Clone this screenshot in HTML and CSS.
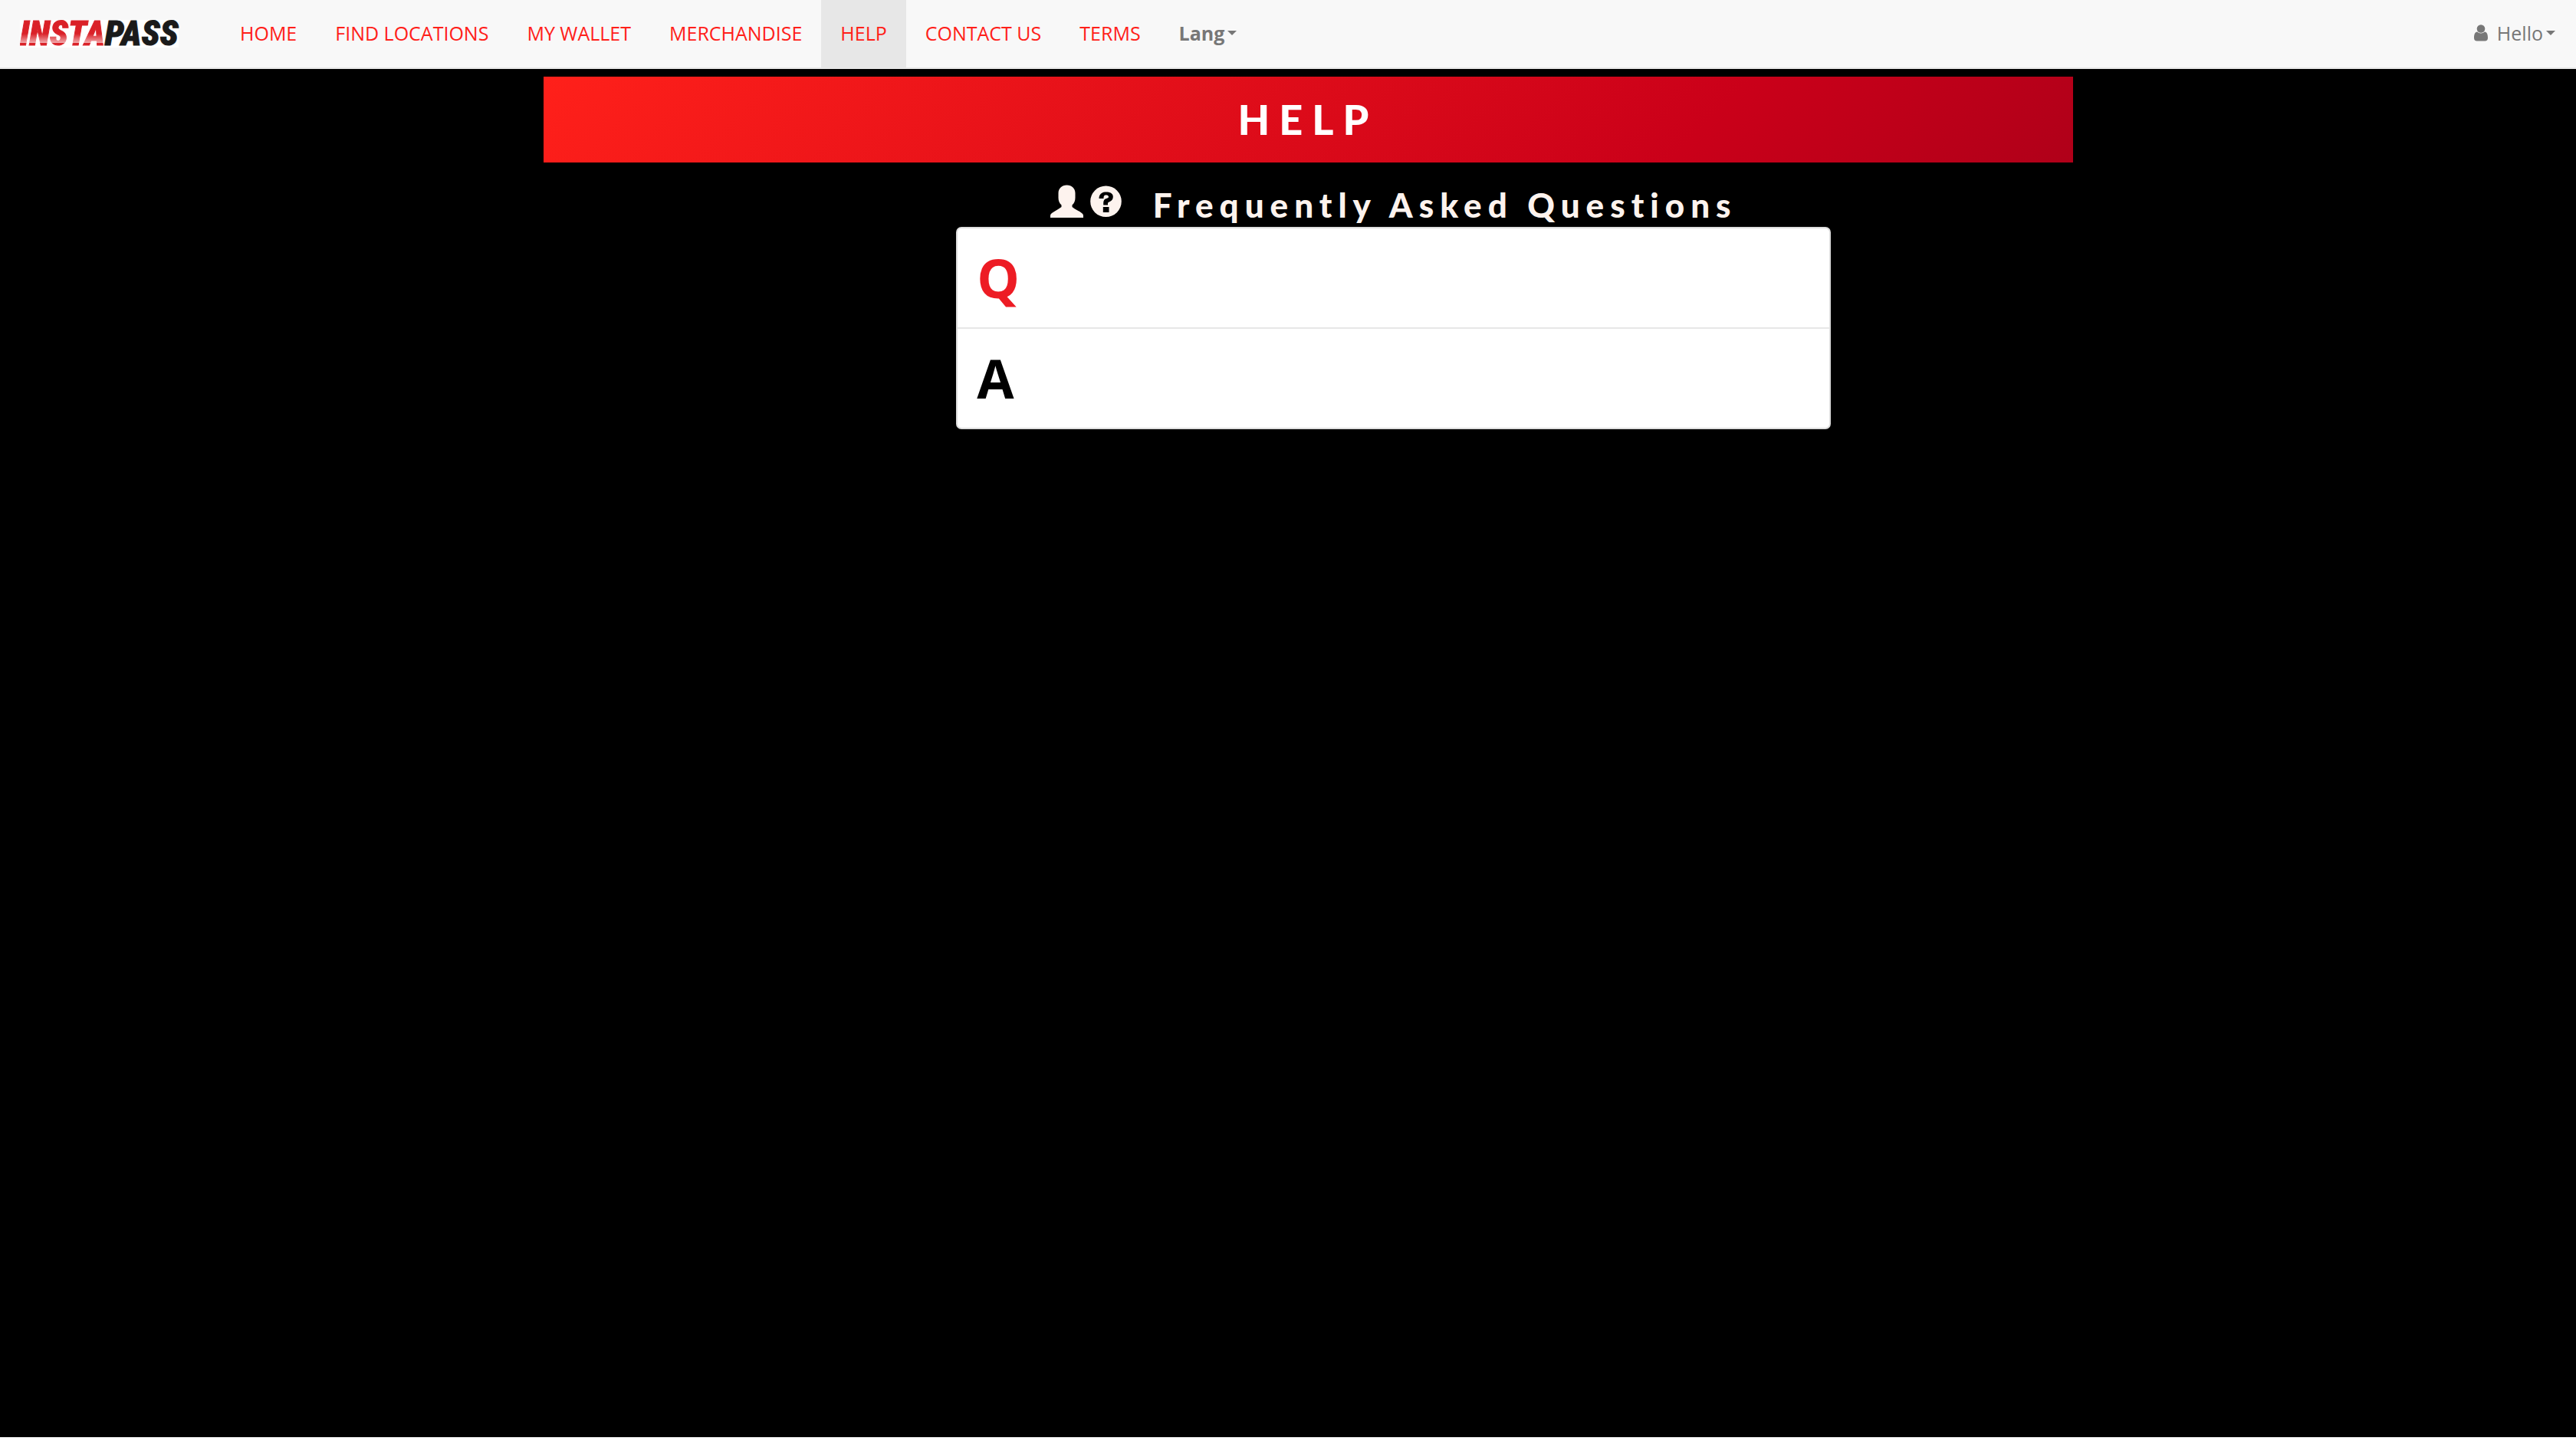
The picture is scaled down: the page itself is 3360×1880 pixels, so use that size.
FILE: index.html
```html
<!DOCTYPE html>
<html lang="en">
<head>
<meta charset="utf-8">
<title>Instapass - Help</title>
<link rel="stylesheet" href="styles.css">
</head>
<body>
<div class="page">
<header class="navbar">
  <a class="brand" href="#" aria-label="Instapass"><span class="logo"><span class="brand-insta">INSTA</span><span class="brand-pass">PASS</span></span></a>
  <nav class="nav">
    <a class="nav-link" href="#">HOME</a>
    <a class="nav-link" href="#">FIND LOCATIONS</a>
    <a class="nav-link" href="#">MY WALLET</a>
    <a class="nav-link" href="#">MERCHANDISE</a>
    <a class="nav-link active" href="#">HELP</a>
    <a class="nav-link" href="#">CONTACT US</a>
    <a class="nav-link" href="#">TERMS</a>
    <button class="nav-link toggle lang" type="button">Lang<span class="caret"></span></button>
  </nav>
  <button class="nav-link toggle user" type="button">
    <svg class="user-icon" viewBox="0 0 18 22" aria-hidden="true"><circle cx="9" cy="5.500" r="5.300"/><path d="M4.200 9.600C1 10 0 13.500 0 17.500C0 20 1.400 21.600 3.800 21.600H14.200C16.600 21.600 18 20 18 17.500C18 13.500 17 10 13.800 9.600C11.500 12.200 6.500 12.200 4.200 9.600Z"/></svg>
    Hello<span class="caret"></span>
  </button>
</header>
<main class="container">
  <h1 class="banner">HELP</h1>
  <section class="faq">
    <h2 class="faq-title">
      <svg class="faq-icon" viewBox="0 0 43 43" aria-hidden="true"><path d="M21.500 0.500C28 0.500 32.500 5 32.500 11V17C32.500 21 31 24.500 28.500 26.500V29C32 32 38 34.500 41 37Q43 38.500 43 40V43H0V40Q0 38.500 2 37C6 34 11 32 14.500 29V26.500C12 24.500 10.500 21 10.500 17V11C10.500 5 15 0.500 21.500 0.500Z"/></svg>
      <svg class="faq-icon" viewBox="0 0 43 43" aria-hidden="true"><path fill-rule="evenodd" d="M21.500 1.500A20.300 20.300 0 1 0 21.500 42.100A20.300 20.300 0 1 0 21.500 1.500ZM12.500 18H18.500C18.500 14.500 19.500 13.500 21.700 13.500C24 13.500 25 14.500 25 15.800C25 16.600 24.500 17.400 23 17.700C19.500 18.400 18.200 20.500 18.200 24V26.500H24V24.500C24 23.300 24.800 22.800 26.200 22.300C29.600 21 30.800 18.600 30.800 15.500C30.800 11.500 27 9.500 21.700 9.500C16 9.500 12.500 12.500 12.500 18ZM17.800 29V36H25.500V29Z"/></svg>
      <span class="faq-text">Frequently Asked Questions</span>
    </h2>
    <ul class="list">
      <li class="item question">Q</li>
      <li class="item answer">A</li>
    </ul>
  </section>
</main>
</div>
</body>
</html>
```
FILE: styles.css
```css
* { box-sizing: border-box; }
html { background: #fff; }
body {
  margin: 0;
  font-family: "Open Sans", sans-serif;
  font-size: 25px;
  line-height: 34px;
}
.page {
  display: flow-root;
  min-height: calc(100vh - 5px);
  background: #000;
}
.navbar {
  display: flex;
  align-items: stretch;
  height: 90px;
  background: #f8f8f8;
  border-bottom: 2px solid #e7e7e7;
}
.brand {
  display: flex;
  align-items: center;
  width: 288px;
  padding-left: 26px;
  font: italic 900 45px/36px "Roboto Condensed", Roboto, sans-serif;
  text-decoration: none;
}
.logo {
  display: flex;
  background: #fff;
}
.brand-insta {
  color: transparent;
  background: linear-gradient(#da2128 50%, #f0a5a8 82%, #da2128 83%);
  background-clip: text;
  -webkit-text-stroke: 1px transparent;
}
.brand-pass {
  color: #1a1a1a;
  -webkit-text-stroke: 1px #1a1a1a;
}
.nav { display: flex; }
.nav-link {
  display: flex;
  align-items: center;
  padding: 0 25px 2px;
  border: 0;
  background: none;
  color: #ff2019;
  font: inherit;
  text-decoration: none;
}
.active { background: #e7e7e7; }
.toggle { color: #777; }
.lang { font-weight: bold; }
.caret {
  margin-left: 4px;
  border: 6px solid transparent;
  border-top-color: currentColor;
  border-bottom: 0;
}
.user {
  margin-left: auto;
  padding-right: 27px;
}
.user-icon {
  width: 18px;
  height: 22px;
  margin-right: 12px;
  fill: currentColor;
}
.container {
  width: 2047px;
  max-width: 100%;
  margin: 10px auto 0;
  padding-left: 52px;
}
.banner {
  margin: 0;
  padding: 24px 0;
  background: linear-gradient(135deg, #ff201a 0%, #ca0019 75%, #b00019 100%);
  color: #fff;
  font: 900 54px/64px Lato, sans-serif;
  letter-spacing: 12px;
  text-align: center;
}
.faq {
  width: 1141px;
  max-width: 100%;
  margin: 29px 0 0 27%;
}
.faq-title {
  display: flex;
  justify-content: center;
  gap: 8px;
  margin: 0 0 3px;
  color: #fdf3ee;
  font: 900 44px/52px Lato, sans-serif;
  letter-spacing: 8px;
}
.faq-icon {
  width: 43px;
  height: 43px;
  fill: currentColor;
}
.faq-text { margin-left: 32px; }
.list {
  margin: 0;
  padding: 0;
  border: 2px solid #ddd;
  border-radius: 7px;
  background: #fff;
  list-style: none;
}
.item {
  padding: 18px 25px;
  font-size: 70px;
  font-weight: bold;
  line-height: 93px;
}
.question { color: #ed1c24; }
.answer {
  border-top: 2px solid #e7e7e7;
  color: #000;
}
```
